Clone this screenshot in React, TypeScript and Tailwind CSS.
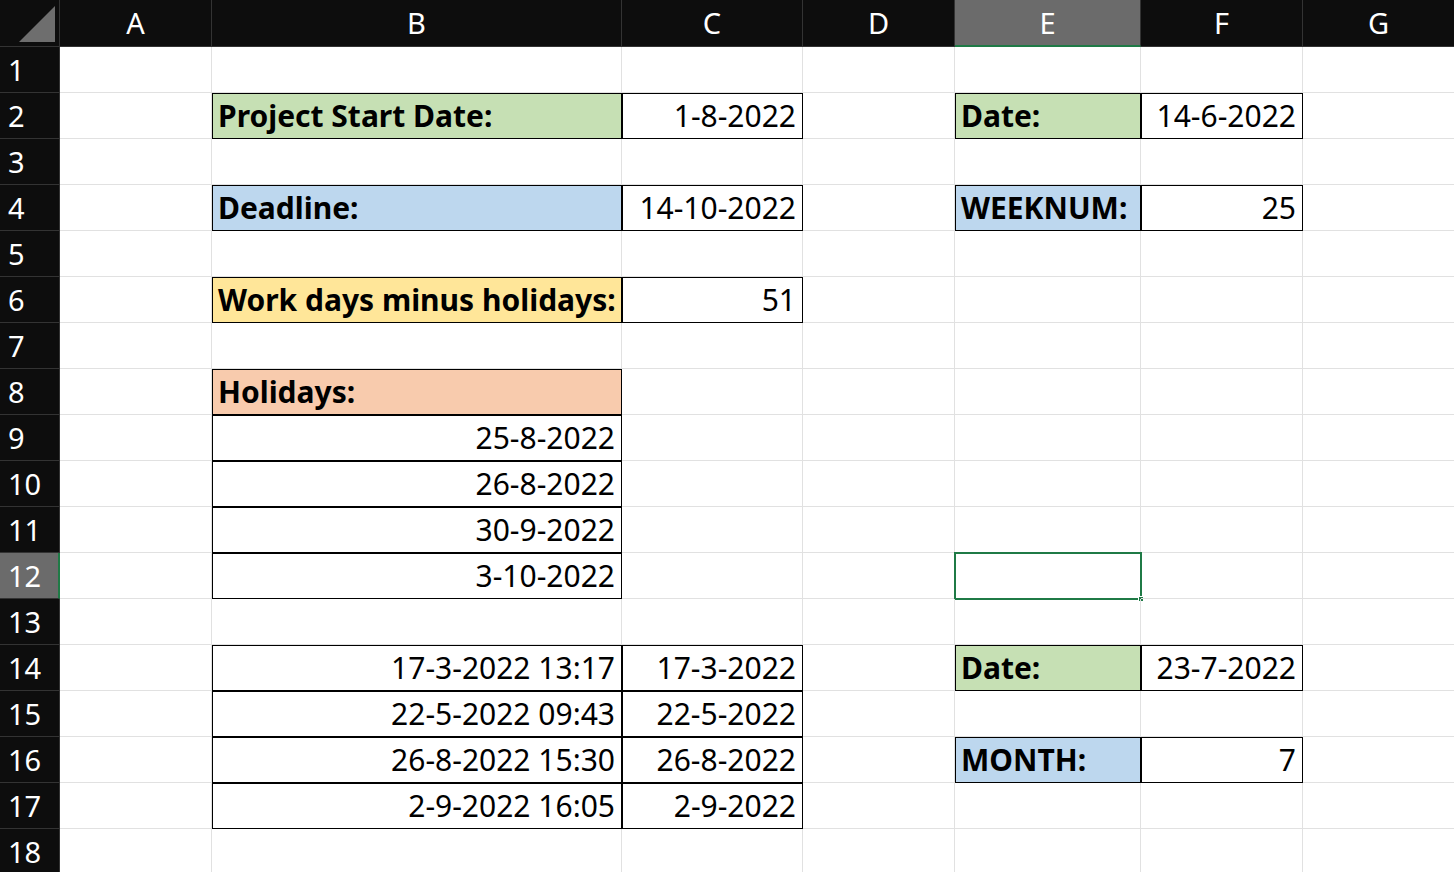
type Cell = { t: string; bold?: boolean; right?: boolean; bg?: string; box?: boolean }

const cols = ["A", "B", "C", "D", "E", "F", "G"]

const data: Record<string, Cell> = {
  B2: { t: "Project Start Date:", bold: true, bg: "bg-[#c6e0b4]", box: true },
  C2: { t: "1-8-2022", right: true, box: true },
  E2: { t: "Date:", bold: true, bg: "bg-[#c6e0b4]", box: true },
  F2: { t: "14-6-2022", right: true, box: true },
  B4: { t: "Deadline:", bold: true, bg: "bg-[#bdd7ee]", box: true },
  C4: { t: "14-10-2022", right: true, box: true },
  E4: { t: "WEEKNUM:", bold: true, bg: "bg-[#bdd7ee]", box: true },
  F4: { t: "25", right: true, box: true },
  B6: { t: "Work days minus holidays:", bold: true, bg: "bg-[#ffe699]", box: true },
  C6: { t: "51", right: true, box: true },
  B8: { t: "Holidays:", bold: true, bg: "bg-[#f8cbad]", box: true },
  B9: { t: "25-8-2022", right: true, box: true },
  B10: { t: "26-8-2022", right: true, box: true },
  B11: { t: "30-9-2022", right: true, box: true },
  B12: { t: "3-10-2022", right: true, box: true },
  B14: { t: "17-3-2022 13:17", right: true, box: true },
  C14: { t: "17-3-2022", right: true, box: true },
  B15: { t: "22-5-2022 09:43", right: true, box: true },
  C15: { t: "22-5-2022", right: true, box: true },
  B16: { t: "26-8-2022 15:30", right: true, box: true },
  C16: { t: "26-8-2022", right: true, box: true },
  B17: { t: "2-9-2022 16:05", right: true, box: true },
  C17: { t: "2-9-2022", right: true, box: true },
  E14: { t: "Date:", bold: true, bg: "bg-[#c6e0b4]", box: true },
  F14: { t: "23-7-2022", right: true, box: true },
  E16: { t: "MONTH:", bold: true, bg: "bg-[#bdd7ee]", box: true },
  F16: { t: "7", right: true, box: true },
}

export default function App() {
  const rows = Array.from({ length: 18 }, (_, i) => i + 1)
  return (
    <div className="w-[1454px] h-[872px] overflow-hidden bg-white font-['Lato',sans-serif] text-[30px] text-black">
      <div className="grid grid-cols-[60px_152px_410px_181px_152px_186px_162px_152px] grid-rows-[47px_repeat(18,46px)]">
        <div className="bg-[#0d0d0d] border-r border-b border-[#333] relative">
          <svg className="absolute right-[4px] bottom-[4px]" width="36" height="36" viewBox="0 0 36 36">
            <polygon points="36,0 36,36 0,36" fill="#6e6e6e" />
          </svg>
        </div>
        {cols.map((c) => (
          <div
            key={c}
            className={`flex items-center justify-center text-[29px] border-r border-[#333] ${
              c === "E" ? "bg-[#6b6b6b] text-white border-b-2 border-b-[#1f7a46]" : "bg-[#0d0d0d] text-white border-b border-b-[#333]"
            }`}
          >
            {c}
          </div>
        ))}
        {rows.map((r) => (
          <>
            <div
              key={"h" + r}
              className={`flex items-center pl-[8px] text-[29px] text-white border-b border-[#333] ${
                r === 12 ? "bg-[#6b6b6b] border-r-2 border-r-[#1f7a46]" : "bg-[#0d0d0d] border-r border-r-[#333]"
              }`}
            >
              {r}
            </div>
            {cols.map((c) => {
              const d = data[c + r]
              const sel = c === "E" && r === 12
              return (
                <div
                  key={c + r}
                  className={`relative flex items-center px-[6px] border-r border-b border-[#e1e1e1] whitespace-nowrap ${
                    d?.bg ?? ""
                  } ${d?.right ? "justify-end" : ""} ${d?.bold ? "font-bold" : ""} ${
                    d?.box ? "outline outline-1 -outline-offset-1 outline-black" : ""
                  }`}
                >
                  {d?.t}
                  {sel && (
                    <div className="absolute -left-[1px] -top-[1px] w-[188px] h-[48px] border-2 border-[#1f7a46]">
                      <div className="absolute -right-[4px] -bottom-[4px] w-[6px] h-[6px] bg-[#1f7a46] border border-white" />
                    </div>
                  )}
                </div>
              )
            })}
          </>
        ))}
      </div>
    </div>
  )
}
